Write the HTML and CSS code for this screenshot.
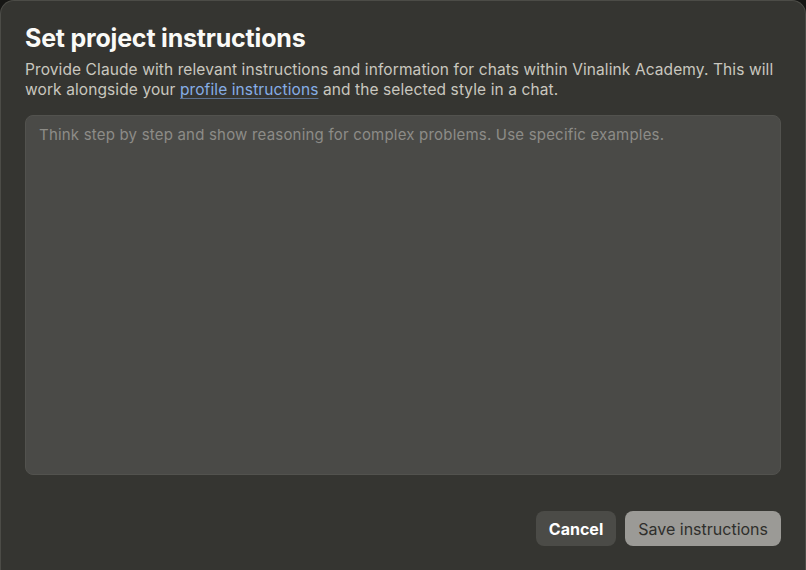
FILE: index.html
```html
<!DOCTYPE html>
<html>
<head>
<meta charset="UTF-8">
<title>Set project instructions</title>
<meta name="viewport" content="width=device-width, initial-scale=1.0">
<link rel="stylesheet" href="styles.css">
</head>
<body>

	<div class="dialog">
		<h2 class="dialog-title">Set project instructions</h2>
		<p class="dialog-desc">
			Provide Claude with relevant instructions and information for chats within Vinalink Academy. This will
			work alongside your <a href="#" class="link">profile instructions</a> and the selected style in a chat.
		</p>

		<textarea class="instructions" placeholder="Think step by step and show reasoning for complex problems. Use specific examples."></textarea>

		<div class="actions">
			<button type="button" class="btn btn-cancel">Cancel</button>
			<button type="button" class="btn btn-save" disabled>Save instructions</button>
		</div>
	</div>

</body>
</html>
```

FILE: styles.css
```css
html, body {
	margin: 0;
	height: 100%;
	overflow: hidden;
}

body {
	background-color: #161614;
	font-family: Inter, "Noto Sans", sans-serif;
}

.dialog {
	box-sizing: border-box;
	height: 570px;
	padding: 21px 24px 0 24px;
	background-color: #353531;
	border: 1px solid #4c4c47;
	border-bottom: none;
	border-radius: 14px 14px 0 0;
	display: flex;
	flex-direction: column;
}

.dialog-title {
	margin: 0;
	font-size: 25px;
	line-height: 32px;
	font-weight: 700;
	color: #fafaf7;
	letter-spacing: -0.2px;
}

.dialog-desc {
	margin: 6px 0 0 0;
	font-size: 15.5px;
	line-height: 20px;
	letter-spacing: 0.1px;
	color: #c9c7bf;
}

.link {
	color: #86aee6;
	text-decoration: underline;
	text-decoration-color: #5c7190;
	text-underline-offset: 3px;
}

.instructions {
	box-sizing: border-box;
	margin-top: 15px;
	height: 360px;
	width: 100%;
	padding: 9px 13px;
	background-color: #4a4a47;
	border: 1px solid #52524e;
	border-radius: 8px;
	font-family: inherit;
	font-size: 15px;
	line-height: 20px;
	letter-spacing: 0.2px;
	color: #eeeeea;
	resize: none;
	outline: none;
}

.instructions::placeholder {
	color: #8d8c87;
}

.actions {
	display: flex;
	justify-content: flex-end;
	gap: 9px;
	margin-top: 36px;
}

.btn {
	height: 35px;
	padding: 0 13px;
	border: none;
	border-radius: 8px;
	font-family: inherit;
	font-size: 16px;
}

.btn-cancel {
	background-color: #4b4b47;
	color: #ffffff;
	font-weight: 700;
}

.btn-save {
	background-color: #9b9a96;
	color: #2f2f2c;
}
```
